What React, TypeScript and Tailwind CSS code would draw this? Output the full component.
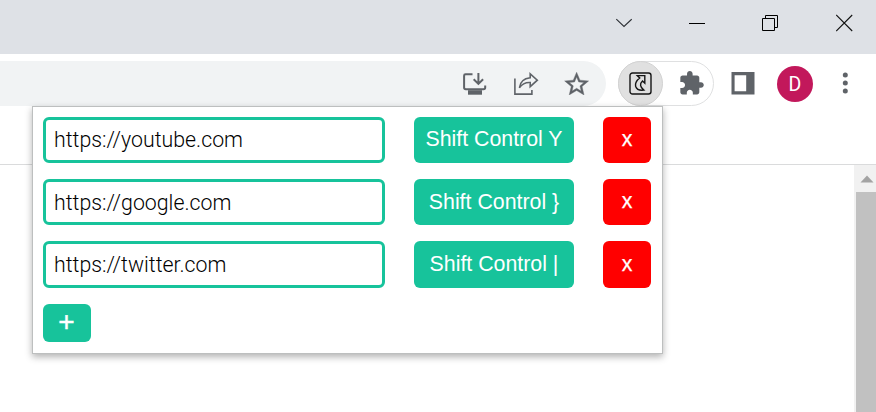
import React from "react";

const shortcuts = [
  { url: "https://youtube.com", keys: "Shift Control Y", height: "h-[46px]", inputPad: "pt-0", pad: "pb-0" },
  { url: "https://google.com", keys: "Shift Control }", height: "h-[46px]", inputPad: "pt-[2px]", pad: "pt-[2px]" },
  { url: "https://twitter.com", keys: "Shift Control |", height: "h-[47px]", inputPad: "pt-0", pad: "pt-px" },
];

function TitleBar() {
  return (
    <header className="flex h-[54px] shrink-0 justify-end bg-[#dee1e6] pt-[14px] pr-[22px]">
      <div className="flex gap-[56px]">
        <svg width="18" height="18" viewBox="0 0 18 18" fill="none" stroke="#2c2f34" strokeWidth="1.1">
          <path d="M2.300 5.200 10 12.500 17.700 5.200" />
        </svg>
        <svg width="18" height="18" viewBox="0 0 18 18" shapeRendering="crispEdges">
          <path d="M1 9h16v1H1z" fill="#000" />
        </svg>
        <svg width="18" height="18" viewBox="0 0 18 18" fill="none" stroke="#000">
          <path d="M.5 4.500h12v12H.5zM3.500 4V1.500h12v12H13" />
        </svg>
        <svg width="18" height="18" viewBox="0 0 18 18" fill="none" stroke="#111" strokeWidth="1.1">
          <path d="m.2 1 16 16m0-16-16 16" />
        </svg>
      </div>
    </header>
  );
}

function AddressBar() {
  return (
    <div className="flex h-[45px] w-[606px] items-start justify-end rounded-r-full bg-[#f1f3f4] pt-[10px] pr-[17px]">
      <svg className="mr-[26px]" width="26" height="26" viewBox="0 0 26 26" fill="none" stroke="#5f6368" strokeWidth="2">
        <path d="M11.500 3.300H4.500Q3.100 3.300 3.100 4.700V16.500Q3.100 18.300 4.800 18.300H22.500Q24.200 18.300 24.200 16.600V14.500" />
        <path d="M17.400 2v10M12.700 8.200l4.700 4.700 4.700-4.700" />
        <path d="M7 19.200h14v4.500H7z" fill="#5f6368" stroke="none" />
      </svg>
      <svg className="mr-[25px]" width="26" height="26" viewBox="0 0 26 26" fill="none" stroke="#5f6368" strokeWidth="1.6">
        <path d="M1.900 7.500v15.600h17V19" />
        <path d="M17.200 2.900 24.300 9.200 17.200 15.600v-4q-6.900-.4-10.800 5.200Q7.500 7.900 17.200 6.800z" />
      </svg>
      <svg width="25" height="24" viewBox="1.500 1 20.800 20" fill="#5f6368" stroke="#5f6368" strokeWidth="0.300">
        <path d="M22 9.240l-7.190-.62L12 2 9.190 8.630 2 9.240l5.460 4.730L5.820 21 12 17.270 18.180 21l-1.630-7.030L22 9.240zM12 15.400l-3.760 2.270 1-4.280-3.320-2.880 4.380-.38L12 6.100l1.710 4.040 4.380.38-3.320 2.880 1 4.280L12 15.400z" />
      </svg>
    </div>
  );
}

function Extensions() {
  return (
    <div className="ml-[12px] flex h-[45px] w-[96px] items-start rounded-full border border-[#dfe0e1]">
      <div className="-mt-px -ml-px flex h-[45px] w-[45px] items-center justify-center rounded-full border border-[#d2d2d2] bg-[#e0e0e0]">
        <svg width="23" height="23" viewBox="0 0 23 23" fill="none" stroke="#151515" strokeWidth="1.400">
          <rect x="1" y="1" width="21" height="21" rx="2.500" />
          <path d="M8.300 3.600H15.800V11.200L13.500 9Q9 13.200 14.800 18.100 8.200 19 6.600 14.200 5.800 9.800 10.700 6z" />
        </svg>
      </div>
      <svg className="mt-[9px] ml-[17px]" width="24" height="24" viewBox="1.700 1 21.500 21.500" fill="#5f6368">
        <path d="M20.500 11H19V7c0-1.100-.9-2-2-2h-4V3.500C13 2.120 11.880 1 10.500 1S8 2.120 8 3.500V5H4c-1.100 0-1.990.9-1.990 2v3.800H3.500c1.490 0 2.700 1.210 2.700 2.700s-1.210 2.700-2.700 2.700H2V20c0 1.100.9 2 2 2h3.800v-1.500c0-1.490 1.210-2.700 2.700-2.700 1.490 0 2.700 1.210 2.700 2.700V22H17c1.100 0 2-.9 2-2v-4h1.500c1.380 0 2.500-1.120 2.500-2.500S21.880 11 20.500 11z" />
      </svg>
    </div>
  );
}

function Toolbar() {
  return (
    <div className="flex h-[111px] shrink-0 items-start border-b border-[#dadbdc] bg-white pt-[7px]">
      <AddressBar />
      <Extensions />
      <svg className="mt-[11px] ml-[17px]" width="24" height="23" viewBox="0 0 24 23">
        <path d="M.5 0h23v22.500H.5zM3.600 3.200v16h11.600v-16z" fill="#5f6368" fillRule="evenodd" />
      </svg>
      <div className="mt-[5px] ml-[22px] flex h-[36px] w-[36px] items-center justify-center rounded-full bg-[#c2185b] pt-[2px] font-[Roboto,sans-serif] text-[19.500px] leading-none text-white">
        D
      </div>
      <svg className="mt-[11px] ml-[28px]" width="8" height="22" viewBox="0 0 8 22" fill="#5f6368">
        <circle cx="4.300" cy="3" r="2.500" />
        <circle cx="4.300" cy="11" r="2.500" />
        <circle cx="4.300" cy="19" r="2.500" />
      </svg>
    </div>
  );
}

function Popup() {
  return (
    <div className="absolute top-[106px] left-[32px] flex h-[248px] w-[631px] flex-col gap-4 border border-[#bdbfbf] bg-white p-[10px] shadow-[0_3px_7px_rgba(0,0,0,0.3)]">
      {shortcuts.map(({ url, keys, height, inputPad, pad }) => (
        <div key={url} className={`flex ${height} shrink-0 gap-[29px]`}>
          <input
            className={`w-[342px] rounded-[6px] border-3 border-[#17c39b] bg-white px-2 ${inputPad} font-[Roboto,sans-serif] text-[21.300px] font-light text-black outline-none`}
            defaultValue={url}
          />
          <button className={`w-[160px] rounded-[6px] bg-[#17c39b] ${pad} font-['Liberation_Sans',Arial,sans-serif] text-[21.330px] whitespace-nowrap text-white`}>
            {keys}
          </button>
          <button className="w-[48px] rounded-[6px] bg-[#ff0000] font-['Liberation_Sans',Arial,sans-serif] text-[21.330px] text-white [-webkit-text-stroke:0.25px_white]">
            x
          </button>
        </div>
      ))}
      <button className="flex h-[38px] w-[48px] items-center justify-center rounded-[6px] bg-[#17c39b] pr-px pb-[3px] font-['Liberation_Sans',Arial,sans-serif] text-[28px] leading-none text-white [-webkit-text-stroke:0.5px_white]">
        +
      </button>
    </div>
  );
}

export default function App() {
  return (
    <div className="relative flex h-[412px] w-[876px] flex-col overflow-hidden bg-white">
      <TitleBar />
      <Toolbar />
      <main className="flex flex-1 justify-end">
        <div className="flex w-[22px] flex-col bg-[#f1f1f1]">
          <div className="flex h-[27px] items-center justify-center pt-px pl-[4px]">
            <svg width="14" height="8" viewBox="0 0 14 8">
              <path d="M.5 7.500 7 .5l6.500 7z" fill="#a3a3a3" />
            </svg>
          </div>
          <div className="ml-[2px] flex-1 bg-[#c1c1c1]" />
        </div>
      </main>
      <Popup />
    </div>
  );
}
